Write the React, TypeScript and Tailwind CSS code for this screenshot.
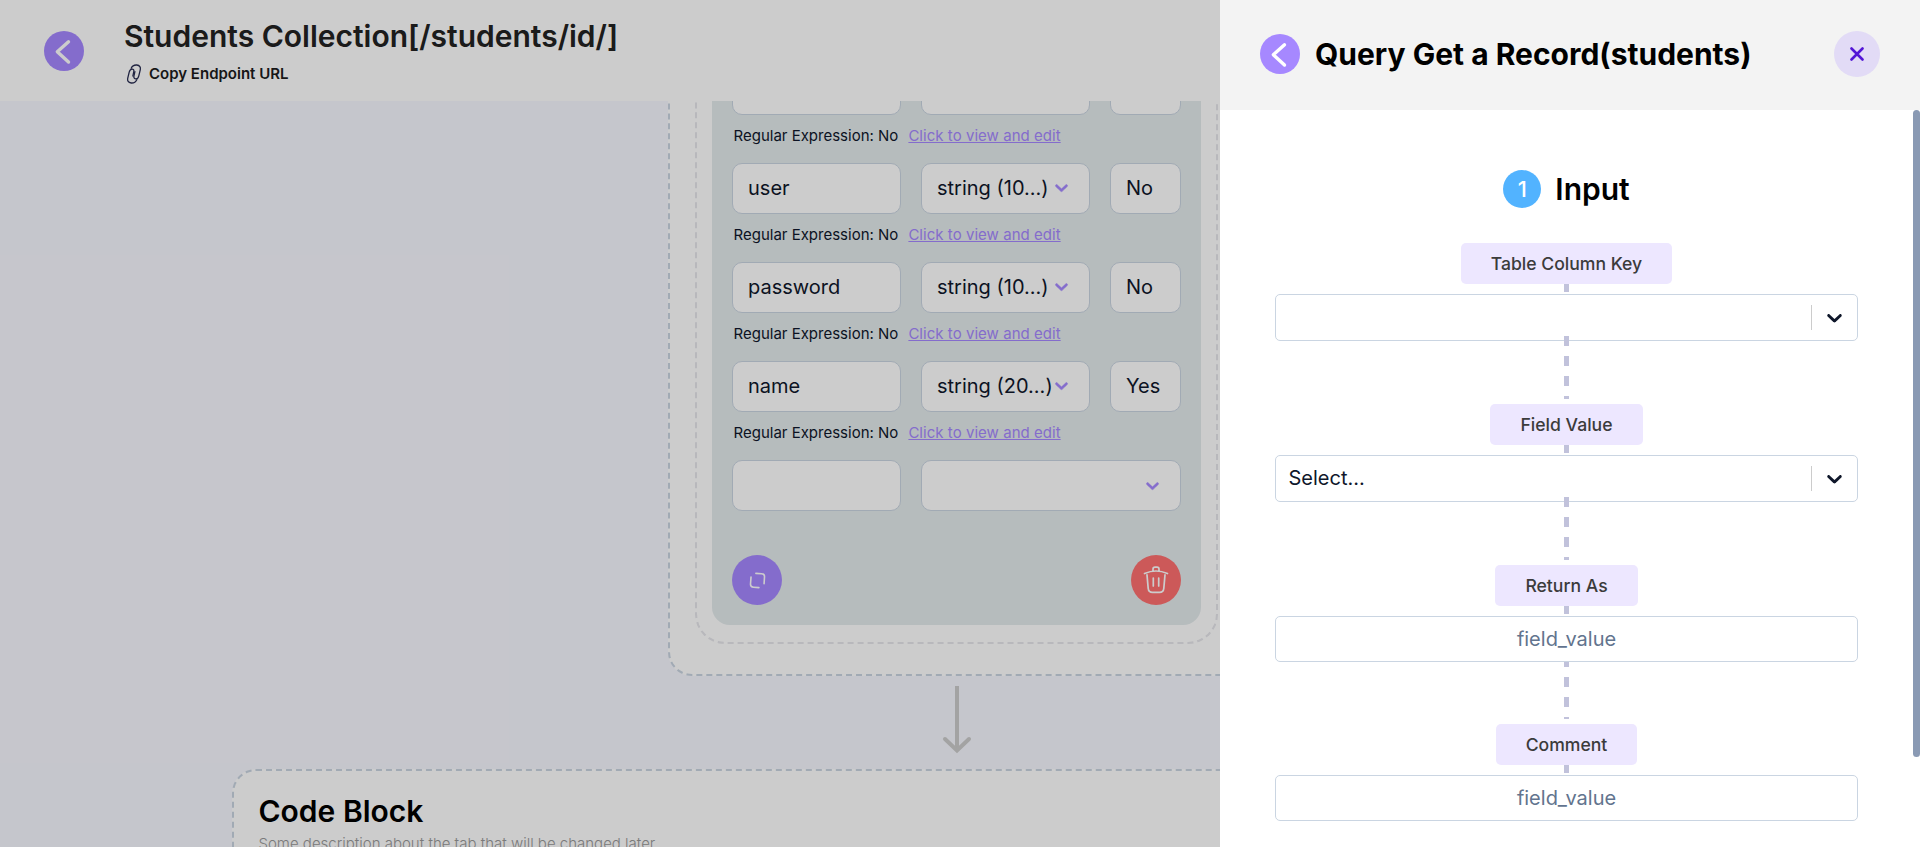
import React from "react";

type Field = { name: string; type: string; required: string };

const fields: Field[] = [
  { name: "", type: "", required: "" },
  { name: "user", type: "string (10...)", required: "No" },
  { name: "password", type: "string (10...)", required: "No" },
  { name: "name", type: "string (20...)", required: "Yes" },
];

function BackButton() {
  return (
    <button className="flex size-10 shrink-0 items-center justify-center rounded-full bg-[#a688ff]">
      <svg width="40" height="40" viewBox="0 0 40 40" fill="none" stroke="#fff" strokeWidth="3.4" strokeLinecap="round" strokeLinejoin="round">
        <path d="M24.5 10.800 13.3 20.700 24.5 31" />
      </svg>
    </button>
  );
}

function LinkIcon() {
  return (
    <svg width="16" height="20" viewBox="0 0 16 20" fill="none" stroke="#292D52" strokeWidth="1.3" strokeLinecap="round">
      <path d="M5.200 4.200C6.200 2 8.200.8 10.800 1c3 .3 4 2.200 3.500 4.600l-1.500 6.200c-.5 2.100-1.700 3.400-3.300 3.100-1.500-.3-1.900-1.500-1.500-3.200l.9-4" />
      <path d="M10.800 15.800c-1 2.200-3 3.400-5.600 3.200-3-.3-4-2.200-3.500-4.600l1.500-6.200c.5-2.100 1.700-3.400 3.300-3.100 1.300.3 1.600 1.300 1.300 2.600L6.900 12" />
    </svg>
  );
}

function Chevron() {
  return (
    <svg className="shrink-0" width="21" height="21" viewBox="0 0 20 20" fill="#a688ff" stroke="#a688ff" strokeWidth="0.4">
      <path d="M4.516 7.548c0.436-0.446 1.043-0.481 1.576 0l3.908 3.747 3.908-3.747c0.533-0.481 1.141-0.446 1.574 0 0.436 0.445 0.408 1.197 0 1.615-0.406 0.418-4.695 4.502-4.695 4.502-0.217 0.223-0.502 0.335-0.787 0.335s-0.570-0.112-0.789-0.335c0 0-4.287-4.084-4.695-4.502s-0.436-1.170 0-1.615z" />
    </svg>
  );
}

const box = "h-[51px] rounded-[10px] border border-slate-300 bg-white text-xl text-slate-900 flex items-center";

function FieldRow({ field }: { field: Field }) {
  return (
    <div className="h-[99px]">
      <div className="flex gap-5">
        <div className={`${box} w-[169px] px-[15px] pb-0.5`}>{field.name}</div>
        <div className={`${box} w-[169px] pb-0.5 pl-[15px]`}>
          <span className="w-[113.500px] whitespace-nowrap">{field.type}</span>
          <Chevron />
        </div>
        <div className={`${box} w-[71px] pb-0.5 pl-[15px]`}>{field.required}</div>
      </div>
      <div className="flex gap-2.5 pt-[9px] pl-[1.500px] text-[15px] leading-6 whitespace-nowrap">
        <span className="text-slate-900">Regular Expression: No</span>
        <span className="tracking-[0.04px] text-[#a688ff] underline">Click to view and edit</span>
      </div>
    </div>
  );
}

function SchemaCard() {
  return (
    <div className="-mt-[120px] w-[577px] shrink-0 rounded-3xl border-2 border-dashed border-slate-300 bg-white px-[25px] pb-[30px]">
      <div className="rounded-[30px] border-2 border-dashed border-[#e6e6eb] px-[15px] pb-[17px]">
        <div className="rounded-[18px] bg-[#e4ebed] px-5 pt-[79px] pb-5">
          {fields.map((f, i) => (
            <FieldRow key={i} field={f} />
          ))}
          <div className="flex gap-5">
            <div className={`${box} w-[169px]`} />
            <div className={`${box} w-[260px] justify-end pr-[17px]`}>
              <Chevron />
            </div>
          </div>
          <div className="mt-11 flex justify-between">
            <button className="flex size-[50px] items-center justify-center rounded-full bg-[#a688ff]">
              <svg width="17" height="17" viewBox="0 0 16 16" fill="none" stroke="#fff" strokeWidth="1.500" strokeLinejoin="round" strokeLinecap="round">
                <path d="M6.500 1.300 11.800 1.700q2.900.2 2.800 2.700L14.200 11M1.900 4.800 1.400 11.500q0 2.600 2.900 2.800l5 .4" />
              </svg>
            </button>
            <button className="flex size-[50px] items-center justify-center rounded-full bg-[#ff7070]">
              <svg width="26" height="28" viewBox="0 0 26 28" fill="none" stroke="#fff" strokeWidth="1.7" strokeLinecap="round" strokeLinejoin="round">
                <path d="M1.500 7.500Q13 2.500 24.500 7.500M10 4.600V3.200Q10 1.200 12 1.200h2q2 0 2 2v1.400M4 8.800l1.200 13.500q.4 4 4.300 4h7q3.900 0 4.300-4L22 8.800M10.300 12v8M15.700 12v8" />
              </svg>
            </button>
          </div>
        </div>
      </div>
    </div>
  );
}

function Select({ value }: { value: string }) {
  return (
    <div className="flex h-[47px] w-[583px] items-center rounded-[5px] border border-slate-300 bg-white pl-[12.500px] text-xl text-slate-900">
      <span className="flex-1 pb-px">{value}</span>
      <span className="h-[25px] w-px bg-[#cccccc]" />
      <span className="flex w-[45px] justify-center">
        <svg width="25" height="25" viewBox="0 0 20 20" fill="#0f172a">
          <path d="M4.516 7.548c0.436-0.446 1.043-0.481 1.576 0l3.908 3.747 3.908-3.747c0.533-0.481 1.141-0.446 1.574 0 0.436 0.445 0.408 1.197 0 1.615-0.406 0.418-4.695 4.502-4.695 4.502-0.217 0.223-0.502 0.335-0.787 0.335s-0.570-0.112-0.789-0.335c0 0-4.287-4.084-4.695-4.502s-0.436-1.170 0-1.615z" />
        </svg>
      </span>
    </div>
  );
}

function TextField() {
  return (
    <div className="flex h-[46px] w-[583px] items-center justify-center rounded-[5px] border border-slate-300 bg-white text-xl text-slate-500">
      field_value
    </div>
  );
}

function Step({ label, children }: { label: string; children: React.ReactNode }) {
  return (
    <>
      <div className="flex h-[41px] shrink-0 items-center rounded-[5px] bg-[#ede7ff] px-[30px] pt-0.5 text-[17.600px] font-medium text-[#3b3b3b]">
        {label}
      </div>
      <div className="h-2 w-[5px] shrink-0 bg-[#c1c2db]" />
      <div className="mt-0.5 shrink-0">{children}</div>
    </>
  );
}

const dashes = "w-[5px] shrink-0 bg-[repeating-linear-gradient(to_bottom,#c1c2db_0px,#c1c2db_10px,transparent_10px,transparent_20px)]";

function Drawer() {
  return (
    <aside className="absolute top-0 right-0 flex h-[847px] w-[700px] flex-col bg-white">
      <div className="flex h-[110px] shrink-0 items-center bg-[#f3f3f3] px-10 pb-0.5">
        <BackButton />
        <h2 className="ml-[15px] flex-1 text-3xl font-bold whitespace-nowrap text-black">Query Get a Record(students)</h2>
        <button className="flex size-[46px] items-center justify-center rounded-full bg-[#e2dbf6]">
          <svg width="14" height="14" viewBox="0 0 14 14" stroke="#5316d6" strokeWidth="2.600" strokeLinecap="round">
            <path d="M1.500 1.500 12.500 12.500M12.500 1.500 1.500 12.500" />
          </svg>
        </button>
      </div>
      <div className="flex min-h-0 flex-1">
        <div className="flex flex-1 flex-col items-center pt-[60px]">
          <div className="flex h-[38px] shrink-0 items-center gap-[14px]">
            <span className="flex size-[38px] items-center justify-center rounded-full bg-[#52b3ff] text-[22px] font-medium text-white">1</span>
            <h3 className="text-3xl font-semibold text-black">Input</h3>
          </div>
          <div className="h-[35px] shrink-0" />
          <Step label="Table Column Key">
            <Select value="" />
          </Step>
          <div className={`${dashes} z-10 -mt-[5px] h-[63px]`} />
          <div className="h-[5px] shrink-0" />
          <Step label="Field Value">
            <Select value="Select..." />
          </Step>
          <div className={`${dashes} z-10 -mt-[5px] h-[63px]`} />
          <div className="h-[5px] shrink-0" />
          <Step label="Return As">
            <TextField />
          </Step>
          <div className={`${dashes} h-[57px] bg-[position:0_-5px] bg-[size:5px_80px]`} />
          <div className="h-[5px] shrink-0" />
          <Step label="Comment">
            <TextField />
          </Step>
        </div>
        <div className="w-[7px]">
          <div className="h-[647px] rounded-full bg-[#8a9ab4]" />
        </div>
      </div>
    </aside>
  );
}

export default function App() {
  return (
    <div className="relative h-[847px] w-[1920px] overflow-hidden bg-[#f7f8ff] font-['Inter',sans-serif]">
      <div className="flex h-full flex-col">
        <header className="flex h-[101px] shrink-0 items-center bg-white pl-11">
          <BackButton />
          <div className="ml-10">
            <h1 className="text-3xl leading-9 font-semibold text-[#222]">Students Collection[/students/id/]</h1>
            <div className="mt-[10px] flex h-5 items-center gap-[7px] pl-0.5">
              <LinkIcon />
              <span className="pt-0.5 text-[15px] font-semibold text-[#1c1c1c]">Copy Endpoint URL</span>
            </div>
          </div>
        </header>
        <main className="flex min-h-0 w-[1913px] flex-1 flex-col items-center overflow-hidden">
          <SchemaCard />
          <svg className="mt-2.5 shrink-0" width="30" height="68" viewBox="0 0 30 68" fill="none" stroke="#cccccc" strokeWidth="4">
            <path d="M15 0V63" />
            <path d="M3 53 15 64.500 27 53" strokeLinecap="round" />
          </svg>
          <section className="mt-[15px] h-[300px] w-[1449px] shrink-0 rounded-3xl border-2 border-dashed border-slate-300 bg-white px-[24.500px] pt-[22px]">
            <h2 className="text-3xl font-semibold text-black">Code Block</h2>
            <p className="mt-1 text-[15px] font-light text-[#999]">Some description about the tab that will be changed later</p>
          </section>
        </main>
      </div>
      <div className="absolute inset-0 bg-black/20" />
      <Drawer />
    </div>
  );
}
